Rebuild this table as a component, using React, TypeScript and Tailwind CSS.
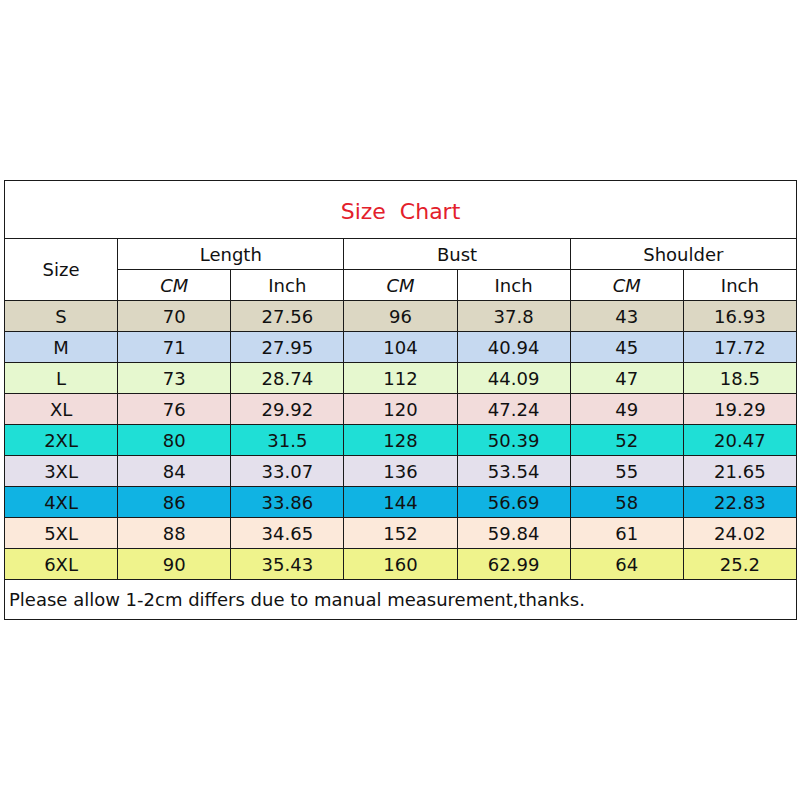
import React from "react";

const rows = [
  { size: "S", bg: "bg-[#dcd7c3]", v: ["70", "27.56", "96", "37.8", "43", "16.93"] },
  { size: "M", bg: "bg-[#c6d9f0]", v: ["71", "27.95", "104", "40.94", "45", "17.72"] },
  { size: "L", bg: "bg-[#e6f8cf]", v: ["73", "28.74", "112", "44.09", "47", "18.5"] },
  { size: "XL", bg: "bg-[#f2dcdb]", v: ["76", "29.92", "120", "47.24", "49", "19.29"] },
  { size: "2XL", bg: "bg-[#1fdfd6]", v: ["80", "31.5", "128", "50.39", "52", "20.47"] },
  { size: "3XL", bg: "bg-[#e4e0ec]", v: ["84", "33.07", "136", "53.54", "55", "21.65"] },
  { size: "4XL", bg: "bg-[#10b3e3]", v: ["86", "33.86", "144", "56.69", "58", "22.83"] },
  { size: "5XL", bg: "bg-[#fce9da]", v: ["88", "34.65", "152", "59.84", "61", "24.02"] },
  { size: "6XL", bg: "bg-[#eff38c]", v: ["90", "35.43", "160", "62.99", "64", "25.2"] },
];

const cell = "border border-[#1a1a1a] p-0 text-center font-normal";

export default function App() {
  return (
    <div
      className="w-[800px] h-[800px] bg-white pt-[180px] px-[4px] text-[#111] text-[18px]"
      style={{ fontFamily: '"Comic Sans MS", "DejaVu Sans", sans-serif' }}
    >
      <table className="w-[793px] table-fixed border-collapse">
        <colgroup>
          {[0, 1, 2, 3, 4, 5, 6].map((i) => (
            <col key={i} className="w-[113px]" />
          ))}
        </colgroup>
        <thead>
          <tr className="h-[58px]">
            <th colSpan={7} className={`${cell} text-[22px] text-[#e3202b] pt-1`}>
              Size&nbsp; Chart
            </th>
          </tr>
          <tr className="h-[31px]">
            <th rowSpan={2} className={cell}>Size</th>
            <th colSpan={2} className={cell}>Length</th>
            <th colSpan={2} className={cell}>Bust</th>
            <th colSpan={2} className={cell}>Shoulder</th>
          </tr>
          <tr className="h-[31px]">
            <th className={`${cell} italic`}>CM</th>
            <th className={cell}>Inch</th>
            <th className={`${cell} italic`}>CM</th>
            <th className={cell}>Inch</th>
            <th className={`${cell} italic`}>CM</th>
            <th className={cell}>Inch</th>
          </tr>
        </thead>
        <tbody>
          {rows.map((r) => (
            <tr key={r.size} className={`h-[31px] ${r.bg}`}>
              <td className={cell}>{r.size}</td>
              {r.v.map((x, i) => (
                <td key={i} className={cell}>
                  {x}
                </td>
              ))}
            </tr>
          ))}
          <tr className="h-[40px]">
            <td colSpan={7} className={`${cell} text-left pl-[4px]`}>
              Please allow 1-2cm differs due to manual measurement,thanks.
            </td>
          </tr>
        </tbody>
      </table>
    </div>
  );
}
